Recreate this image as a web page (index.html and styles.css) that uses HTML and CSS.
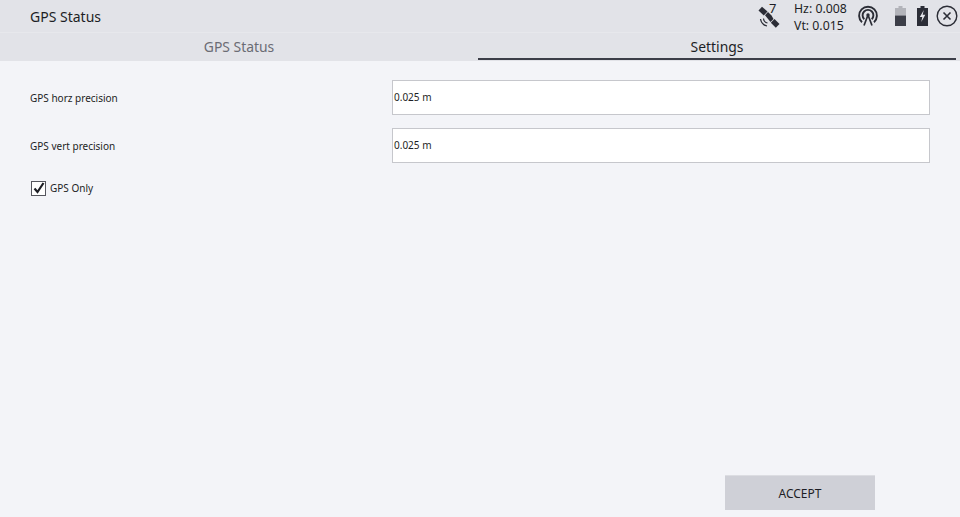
FILE: index.html
```html
<!DOCTYPE html>
<html lang="en">
<head>
<meta charset="utf-8">
<title>GPS Status</title>
<link rel="stylesheet" href="styles.css">
</head>
<body>
<div class="app">
  <header class="topbar">
    <div class="title">GPS Status</div>
    <div class="status">
      <div class="sat">
        <svg class="sat-icon" width="24" height="24" viewBox="0 0 24 24">
          <g fill="#2b2d36">
            <path d="M0.500 4.500 4 0.800 9.500 5.500 5.800 9.500Z"/>
            <path d="M7 9.200 10 6 13.500 9.500 15.500 13 12.500 16Z"/>
            <path d="M12.800 16.800 16.500 13 21.500 18 17.800 21.800Z"/>
          </g>
          <g fill="none" stroke="#2b2d36" stroke-width="1.200">
            <path d="M5.500 12.500a5 5 0 0 0 4 4.500"/>
            <path d="M2.500 13a8.500 8.500 0 0 0 6.500 7"/>
          </g>
        </svg>
        <span class="sat-count">7</span>
      </div>
      <div class="precision">
        <div>Hz: 0.008</div>
        <div>Vt: 0.015</div>
      </div>
      <svg class="antenna" width="22" height="22" viewBox="0 0 22 22" fill="none" stroke="#2b2d36" stroke-width="1.900">
        <path d="M5 17.200a8.900 8.900 0 1 1 12 0"/>
        <path d="M7.300 14.200a5.400 5.400 0 1 1 7.400 0"/>
        <circle cx="11" cy="10" r="1.700" fill="#2b2d36" stroke="none"/>
        <path d="M11 10 7 20.500M11 10l4 10.500" stroke-width="1.700"/>
      </svg>
      <svg class="battery" width="11" height="20" viewBox="0 0 11 20">
        <path d="M3.500 0h4v2h3.500v7.500H0V2h3.500Z" fill="#b3b4ba"/>
        <rect y="9.500" width="11" height="10.500" fill="#3c3e48"/>
      </svg>
      <svg class="charging" width="11" height="20" viewBox="0 0 11 20">
        <path d="M3.500 0h4v2h3.500v18H0V2h3.500Z" fill="#2b2d36"/>
        <path d="M6.800 4 2.800 11h2.500l-1 5 4-7.200H5.700Z" fill="#e2e3e8"/>
      </svg>
      <svg class="close" width="22" height="22" viewBox="0 0 22 22" fill="none" stroke="#2b2d36">
        <circle cx="11" cy="11" r="9.800" stroke-width="1.400"/>
        <path d="M7.500 7.500l7 7M14.500 7.500l-7 7" stroke-width="1.600"/>
      </svg>
    </div>
  </header>
  <nav class="tabs">
    <div class="tab">GPS Status</div>
    <div class="tab tab-active">Settings</div>
  </nav>
  <main class="content">
    <div class="field">
      <label class="field-label">GPS horz precision</label>
      <div class="input">0.025 m</div>
    </div>
    <div class="field">
      <label class="field-label">GPS vert precision</label>
      <div class="input">0.025 m</div>
    </div>
    <div class="check-row">
      <span class="checkbox">
        <svg width="12" height="12" viewBox="0 0 12 12" fill="none" stroke="#1d1e25" stroke-width="2.200">
          <path d="M1.500 6.500 4.500 10 10.500 1"/>
        </svg>
      </span>
      <span class="check-label">GPS Only</span>
    </div>
    <div class="actions">
      <button class="accept" type="button">ACCEPT</button>
    </div>
  </main>
</div>
</body>
</html>
```
FILE: styles.css
```css
* { box-sizing: border-box; }
html, body { margin: 0; padding: 0; height: 100%; }
body {
  font-family: "Noto Sans", "Open Sans", sans-serif;
  color: #1d1e25;
  background: #f3f4f8;
  overflow: hidden;
}
.app { width: 960px; height: 517px; display: flex; flex-direction: column; }
.topbar {
  height: 33px;
  flex: none;
  background: #e2e3e8;
  border-bottom: 1px solid #e7e8ec;
  display: flex;
  align-items: center;
  justify-content: space-between;
  padding-left: 30px;
}
.title { font-size: 14px; line-height: 33px; }
.status { display: flex; align-items: center; height: 33px; }
.sat { position: relative; width: 24px; height: 24px; margin-right: 12px; margin-top: 4px; }
.sat-icon { display: block; }
.sat-count { position: absolute; left: 11px; top: -7px; font-size: 13px; line-height: 18px; }
.precision { font-size: 12.300px; line-height: 17px; width: 63px; margin-top: 1px; }
.antenna { margin-right: 16px; }
.battery { margin-right: 11px; }
.charging { margin-right: 8px; }
.close { margin-right: 2px; }
.tabs {
  height: 28px;
  flex: none;
  background: #e2e3e8;
  display: flex;
  padding-right: 4px;
}
.tab {
  flex: 1;
  text-align: center;
  font-size: 13.900px;
  line-height: 27px;
  color: #6b6c74;
}
.tab-active { color: #1d1e25; border-bottom: 2px solid #3c3e48; margin-bottom: 1px; }
.content {
  flex: 1;
  display: flex;
  flex-direction: column;
  padding: 19px 30px 7px;
}
.field { display: flex; align-items: center; height: 35px; margin-bottom: 13px; }
.field-label { width: 362px; font-size: 10px; flex: none; }
.input {
  flex: 1;
  height: 35px;
  background: #fff;
  border: 1px solid #c6c7cc;
  font-size: 10px;
  line-height: 33px;
  padding-left: 1px;
}
.check-row { display: flex; align-items: center; height: 20px; margin-top: 2px; padding-left: 1px; }
.checkbox {
  width: 15px;
  height: 15px;
  border: 1px solid #55565e;
  background: #fff;
  display: flex;
  align-items: center;
  justify-content: center;
  margin-right: 4px;
}
.checkbox svg { display: block; }
.check-label { font-size: 10px; }
.actions { margin-top: auto; display: flex; justify-content: flex-end; padding-right: 55px; }
.accept {
  width: 150px;
  height: 35px;
  border: 0;
  border-top: 1px solid #dcdde2;
  background: #cfd0d7;
  color: #1d1e25;
  font-family: inherit;
  font-size: 12px;
  padding: 0;
}
```
